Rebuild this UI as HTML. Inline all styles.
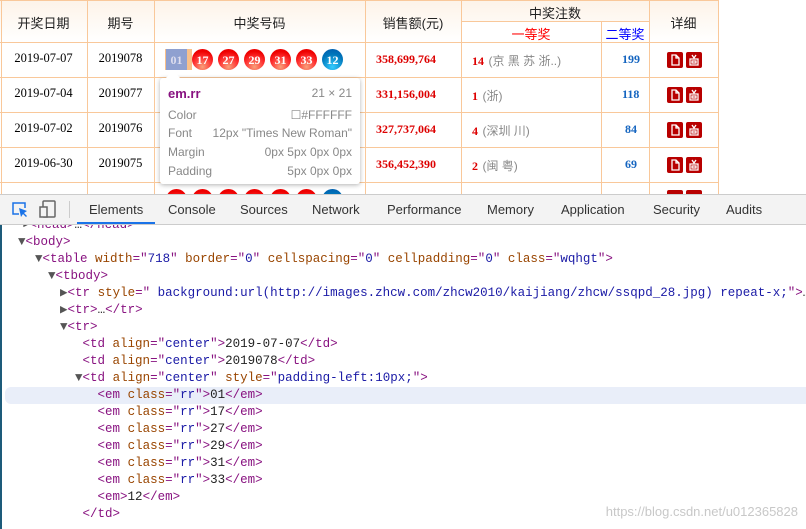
<!DOCTYPE html>
<html><head><meta charset="utf-8"><style>
*{margin:0;padding:0;box-sizing:border-box}
body{width:806px;height:529px;overflow:hidden;background:#fff;position:relative;font-family:"Liberation Sans","Noto Sans CJK SC",sans-serif}
.a{position:absolute}
.vl{position:absolute;width:1px;background:#f9c89a}
.hl{position:absolute;height:1px;background:#f9c89a}
.hd{background:linear-gradient(#fdf3e8,#fff);}
.c{position:absolute;font-size:12px;color:#222;text-align:center}
.t{font-family:"Liberation Serif","Noto Serif CJK SC",serif;font-size:12.5px;color:#000}
.ball{position:absolute;width:21px;height:21px;border-radius:50%;background:radial-gradient(circle at 50% 85%,#f8a07a 0,#f33 45%,#e00 75%);color:#fff;font:bold 12px "Liberation Serif",serif;text-align:center;line-height:22px}
.blue{background:radial-gradient(circle at 50% 85%,#3cf 0,#07b 60%,#05a 100%)}
.red{color:#d00;font:bold 12px "Liberation Serif",serif}
.blu{color:#1565c0;font:bold 12px "Liberation Serif",serif}
.gr{color:#888;font-size:12px}
.ic{position:absolute;width:16px;height:16px;background:#b80000;border-radius:2px}
.ic svg{position:absolute;left:0;top:0}
.cw{position:absolute;left:0;top:217px;width:806px;height:312px;overflow:hidden}
.code{position:absolute;left:0;top:0;font-family:"Liberation Mono",monospace;font-size:12.5px;white-space:pre;line-height:17px;color:#222}
.tg{color:#881280}.at{color:#994500}.av{color:#1a1aa6}.ar{color:#555}
.tab{position:absolute;top:202px;font-size:13px;color:#333}
</style></head><body>
<div class="a hd" style="left:0;top:0;width:718px;height:42px"></div>
<div class="a" style="left:461px;top:21px;width:188px;height:21px;background:#fff"></div>
<div class="hl" style="left:0;top:0;width:719px"></div>
<div class="hl" style="left:461px;top:21px;width:188px"></div>
<div class="hl" style="left:0;top:42px;width:719px"></div>
<div class="hl" style="left:0;top:77px;width:719px"></div>
<div class="hl" style="left:0;top:112px;width:719px"></div>
<div class="hl" style="left:0;top:147px;width:719px"></div>
<div class="hl" style="left:0;top:182px;width:719px"></div>
<div class="vl" style="left:1px;top:0;height:194px"></div>
<div class="vl" style="left:87px;top:0;height:194px"></div>
<div class="vl" style="left:154px;top:0;height:194px"></div>
<div class="vl" style="left:365px;top:0;height:194px"></div>
<div class="vl" style="left:461px;top:0;height:194px"></div>
<div class="vl" style="left:601px;top:21px;height:173px"></div>
<div class="vl" style="left:649px;top:0;height:194px"></div>
<div class="vl" style="left:718px;top:0;height:194px"></div>
<div class="c" style="left:0;width:87px;top:13px;font-size:13px">开奖日期</div>
<div class="c" style="left:87px;width:67px;top:13px;font-size:13px">期号</div>
<div class="c" style="left:154px;width:211px;top:13px;font-size:13px">中奖号码</div>
<div class="c" style="left:365px;width:96px;top:13px;font-size:13px">销售额(元)</div>
<div class="c" style="left:461px;width:188px;top:3px;font-size:13px">中奖注数</div>
<div class="c" style="left:461px;width:140px;top:24px;font-size:13px;color:#f00">一等奖</div>
<div class="c" style="left:601px;width:48px;top:24px;font-size:13px;color:#00f">二等奖</div>
<div class="c" style="left:649px;width:69px;top:13px;font-size:13px">详细</div>
<div class="c t" style="left:0;width:87px;top:51px">2019-07-07</div><div class="c t" style="left:87px;width:67px;top:51px">2019078</div>
<div class="c t" style="left:0;width:87px;top:86px">2019-07-04</div><div class="c t" style="left:87px;width:67px;top:86px">2019077</div>
<div class="c t" style="left:0;width:87px;top:121px">2019-07-02</div><div class="c t" style="left:87px;width:67px;top:121px">2019076</div>
<div class="c t" style="left:0;width:87px;top:156px">2019-06-30</div><div class="c t" style="left:87px;width:67px;top:156px">2019075</div>
<div class="a red" style="left:376px;top:52px">358,699,764</div>
<div class="a red" style="left:376px;top:87px">331,156,004</div>
<div class="a red" style="left:376px;top:122px">327,737,064</div>
<div class="a red" style="left:376px;top:157px">356,452,390</div>
<div class="a" style="left:472px;top:52px"><span class="red">14</span> <span class="gr">(京 黑 苏 浙..)</span></div>
<div class="a" style="left:472px;top:87px"><span class="red">1</span> <span class="gr">(浙)</span></div>
<div class="a" style="left:472px;top:122px"><span class="red">4</span> <span class="gr">(深圳 川)</span></div>
<div class="a" style="left:472px;top:157px"><span class="red">2</span> <span class="gr">(闽 粤)</span></div>
<div class="a blu" style="left:622px;top:52px">199</div>
<div class="a blu" style="left:622px;top:87px">118</div>
<div class="a blu" style="left:625px;top:122px">84</div>
<div class="a blu" style="left:625px;top:157px">69</div>
<!-- icons -->
<div class="ic" style="left:667px;top:52px"><svg width="16" height="16"><path d="M5 3h4l3 3v7H5z M9 3v3h3" fill="none" stroke="#fff" stroke-width="1.3"/></svg></div><div class="ic" style="left:686px;top:52px"><svg width="16" height="16"><path d="M6 3l2 3l2-3M4 7h8v6H4z M6 9h4v2H6z" fill="none" stroke="#fff" stroke-width="1.3"/></svg></div>
<div class="ic" style="left:667px;top:87px"><svg width="16" height="16"><path d="M5 3h4l3 3v7H5z M9 3v3h3" fill="none" stroke="#fff" stroke-width="1.3"/></svg></div><div class="ic" style="left:686px;top:87px"><svg width="16" height="16"><path d="M6 3l2 3l2-3M4 7h8v6H4z M6 9h4v2H6z" fill="none" stroke="#fff" stroke-width="1.3"/></svg></div>
<div class="ic" style="left:667px;top:122px"><svg width="16" height="16"><path d="M5 3h4l3 3v7H5z M9 3v3h3" fill="none" stroke="#fff" stroke-width="1.3"/></svg></div><div class="ic" style="left:686px;top:122px"><svg width="16" height="16"><path d="M6 3l2 3l2-3M4 7h8v6H4z M6 9h4v2H6z" fill="none" stroke="#fff" stroke-width="1.3"/></svg></div>
<div class="ic" style="left:667px;top:157px"><svg width="16" height="16"><path d="M5 3h4l3 3v7H5z M9 3v3h3" fill="none" stroke="#fff" stroke-width="1.3"/></svg></div><div class="ic" style="left:686px;top:157px"><svg width="16" height="16"><path d="M6 3l2 3l2-3M4 7h8v6H4z M6 9h4v2H6z" fill="none" stroke="#fff" stroke-width="1.3"/></svg></div>
<div class="ic" style="left:667px;top:190px"></div><div class="ic" style="left:686px;top:190px"></div>
<!-- balls -->
<div class="a" style="left:165px;top:49px;width:27px;height:21px;background:#f9c08a"></div>
<div class="ball" style="left:166px;top:49px;background:#8fa0d0;border-radius:0;color:#dde">01</div>
<div class="ball" style="left:192px;top:49px">17</div>
<div class="ball" style="left:218px;top:49px">27</div>
<div class="ball" style="left:244px;top:49px">29</div>
<div class="ball" style="left:270px;top:49px">31</div>
<div class="ball" style="left:296px;top:49px">33</div>
<div class="ball blue" style="left:322px;top:49px">12</div>
<div class="ball" style="left:166px;top:189px"></div><div class="ball" style="left:192px;top:189px"></div><div class="ball" style="left:218px;top:189px"></div><div class="ball" style="left:244px;top:189px"></div><div class="ball" style="left:270px;top:189px"></div><div class="ball" style="left:296px;top:189px"></div><div class="ball blue" style="left:322px;top:189px"></div>
<!-- tooltip -->
<div class="a" style="left:160px;top:78px;width:200px;height:106px;background:#fff;border-radius:3px;box-shadow:0 1px 5px rgba(0,0,0,.3);font-size:12px;color:#888">
<div class="a" style="left:8px;top:-5px;width:10px;height:10px;background:#fff;transform:rotate(45deg)"></div>
<div class="a" style="left:8px;top:8px;color:#881280;font-weight:bold;font-size:13px">em.rr</div>
<div class="a" style="right:8px;top:8px">21 × 21</div>
<div class="a" style="left:8px;top:30px">Color</div><div class="a" style="right:8px;top:30px">☐#FFFFFF</div>
<div class="a" style="left:8px;top:48px">Font</div><div class="a" style="right:8px;top:48px">12px "Times New Roman"</div>
<div class="a" style="left:8px;top:67px">Margin</div><div class="a" style="right:8px;top:67px">0px 5px 0px 0px</div>
<div class="a" style="left:8px;top:86px">Padding</div><div class="a" style="right:8px;top:86px">5px 0px 0px</div>
</div>
<!-- devtools code -->
<div class="cw">
<div class="a" style="left:5px;top:170px;width:801px;height:17px;background:#e9eef9;border-radius:6px 0 0 6px"></div>
<div class="code"><span style="padding-left:22px"></span><span class="ar">▸</span><span class="tg">&lt;head&gt;</span>…<span class="tg">&lt;/head&gt;</span>
<span style="padding-left:18px"></span><span class="ar">▼</span><span class="tg">&lt;body&gt;</span>
<span style="padding-left:35px"></span><span class="ar">▼</span><span class="tg">&lt;table</span> <span class="at">width</span><span class="tg">="</span><span class="av">718</span><span class="tg">"</span> <span class="at">border</span><span class="tg">="</span><span class="av">0</span><span class="tg">"</span> <span class="at">cellspacing</span><span class="tg">="</span><span class="av">0</span><span class="tg">"</span> <span class="at">cellpadding</span><span class="tg">="</span><span class="av">0</span><span class="tg">"</span> <span class="at">class</span><span class="tg">="</span><span class="av">wqhgt</span><span class="tg">"&gt;</span>
<span style="padding-left:48px"></span><span class="ar">▼</span><span class="tg">&lt;tbody&gt;</span>
        <span class="ar">▶</span><span class="tg">&lt;tr</span> <span class="at">style</span><span class="tg">="</span><span class="av"> background:url(http://images.zhcw.com/zhcw2010/kaijiang/zhcw/ssqpd_28.jpg) repeat-x;</span><span class="tg">"&gt;</span>…<span class="tg">&lt;/tr&gt;</span>
        <span class="ar">▶</span><span class="tg">&lt;tr&gt;</span>…<span class="tg">&lt;/tr&gt;</span>
        <span class="ar">▼</span><span class="tg">&lt;tr&gt;</span>
           <span class="tg">&lt;td</span> <span class="at">align</span><span class="tg">="</span><span class="av">center</span><span class="tg">"&gt;</span>2019-07-07<span class="tg">&lt;/td&gt;</span>
           <span class="tg">&lt;td</span> <span class="at">align</span><span class="tg">="</span><span class="av">center</span><span class="tg">"&gt;</span>2019078<span class="tg">&lt;/td&gt;</span>
          <span class="ar">▼</span><span class="tg">&lt;td</span> <span class="at">align</span><span class="tg">="</span><span class="av">center</span><span class="tg">"</span> <span class="at">style</span><span class="tg">="</span><span class="av">padding-left:10px;</span><span class="tg">"&gt;</span>
             <span class="tg">&lt;em</span> <span class="at">class</span><span class="tg">="</span><span class="av">rr</span><span class="tg">"&gt;</span>01<span class="tg">&lt;/em&gt;</span>
             <span class="tg">&lt;em</span> <span class="at">class</span><span class="tg">="</span><span class="av">rr</span><span class="tg">"&gt;</span>17<span class="tg">&lt;/em&gt;</span>
             <span class="tg">&lt;em</span> <span class="at">class</span><span class="tg">="</span><span class="av">rr</span><span class="tg">"&gt;</span>27<span class="tg">&lt;/em&gt;</span>
             <span class="tg">&lt;em</span> <span class="at">class</span><span class="tg">="</span><span class="av">rr</span><span class="tg">"&gt;</span>29<span class="tg">&lt;/em&gt;</span>
             <span class="tg">&lt;em</span> <span class="at">class</span><span class="tg">="</span><span class="av">rr</span><span class="tg">"&gt;</span>31<span class="tg">&lt;/em&gt;</span>
             <span class="tg">&lt;em</span> <span class="at">class</span><span class="tg">="</span><span class="av">rr</span><span class="tg">"&gt;</span>33<span class="tg">&lt;/em&gt;</span>
             <span class="tg">&lt;em&gt;</span>12<span class="tg">&lt;/em&gt;</span>
           <span class="tg">&lt;/td&gt;</span></div>
</div>
<!-- devtools toolbar -->
<div class="a" style="left:0;top:194px;width:806px;height:31px;background:#f3f3f3;border-top:1px solid #ccc;border-bottom:1px solid #ccc"></div>
<svg class="a" style="left:10px;top:200px" width="20" height="20"><path d="M9 14H3V3h12v5" fill="none" stroke="#1a73e8" stroke-width="1.5"/><path d="M9 8l2 9 2-3 3 3 1-1-3-3 3-2z" fill="#1a73e8"/></svg>
<svg class="a" style="left:39px;top:199px" width="20" height="20"><rect x="4" y="2" width="12" height="16" rx="1" fill="none" stroke="#666" stroke-width="1.5"/><rect x="1" y="8" width="7" height="10" fill="#f3f3f3" stroke="#666" stroke-width="1.5"/></svg>
<div class="a" style="left:69px;top:201px;width:1px;height:17px;background:#ccc"></div>
<div class="tab" style="left:89px">Elements</div>
<div class="a" style="left:77px;top:222px;width:78px;height:2px;background:#1a73e8"></div>
<div class="tab" style="left:168px">Console</div>
<div class="tab" style="left:240px">Sources</div>
<div class="tab" style="left:312px">Network</div>
<div class="tab" style="left:387px">Performance</div>
<div class="tab" style="left:487px">Memory</div>
<div class="tab" style="left:561px">Application</div>
<div class="tab" style="left:653px">Security</div>
<div class="tab" style="left:726px">Audits</div>
<div class="a" style="left:0;top:225px;width:2px;height:304px;background:#1d5b7a"></div>
<div class="a" style="right:8px;top:504px;font-size:13px;color:#c8c8c8">https://blog.csdn.net/u012365828</div>
</body></html>
